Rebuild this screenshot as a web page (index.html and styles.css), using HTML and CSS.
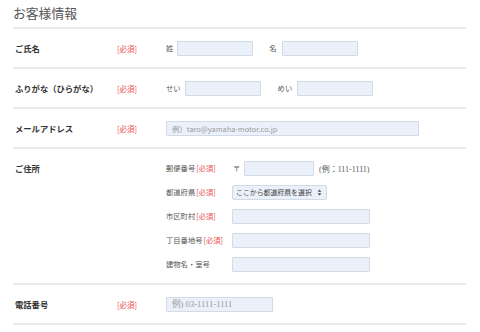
FILE: index.html
```html
<!DOCTYPE html>
<html lang="ja">
<head>
<meta charset="utf-8">
<link rel="stylesheet" href="styles.css">
</head>
<body>
<div class="form">
  <h2 class="title">お客様情報</h2>

  <div class="row">
    <div class="label">ご氏名</div>
    <div class="req">[必須]</div>
    <div class="content">
      <span class="fl">姓</span><input class="in w76" type="text">
      <span class="fl gap-name">名</span><input class="in w76" type="text">
    </div>
  </div>

  <div class="row">
    <div class="label">ふりがな（ひらがな）</div>
    <div class="req">[必須]</div>
    <div class="content">
      <span class="fl">せい</span><input class="in w76" type="text">
      <span class="fl gap-kana">めい</span><input class="in w76" type="text">
    </div>
  </div>

  <div class="row">
    <div class="label">メールアドレス</div>
    <div class="req">[必須]</div>
    <div class="content">
      <input class="in w253" type="text" placeholder="例）taro@yamaha-motor.co.jp">
    </div>
  </div>

  <div class="row row-addr">
    <div class="label">ご住所</div>
    <div class="req"></div>
    <div class="content addr">
      <div class="sub"><span class="sl">郵便番号<span class="sreq">[必須]</span></span><span class="zip">〒</span><input class="in w70" type="text"><span class="ex">(例：111-1111)</span></div>
      <div class="sub"><span class="sl">都道府県<span class="sreq">[必須]</span></span><div class="sel">ここから都道府県を選択<svg class="arr" width="5" height="7" viewBox="0 0 5 7"><path d="M2.5 0.5 L4.5 2.8 L0.5 2.8 Z M2.5 6.5 L4.5 4.2 L0.5 4.2 Z" fill="#555"/></svg></div></div>
      <div class="sub"><span class="sl">市区町村<span class="sreq">[必須]</span></span><input class="in w138" type="text"></div>
      <div class="sub"><span class="sl">丁目番地号<span class="sreq">[必須]</span></span><input class="in w138" type="text"></div>
      <div class="sub"><span class="sl">建物名・室号</span><input class="in w138" type="text"></div>
    </div>
  </div>

  <div class="row">
    <div class="label">電話番号</div>
    <div class="req">[必須]</div>
    <div class="content">
      <input class="in w107 serif" type="text" placeholder="例) 03-1111-1111">
    </div>
  </div>
</div>
</body>
</html>
```

FILE: styles.css
```css
html, body {
  margin: 0;
  padding: 0;
  background: #ffffff;
}
body {
  font-family: "Noto Sans CJK JP", "Noto Sans", sans-serif;
  color: #333;
}
.form {
  margin-left: 13px;
  width: 453px;
}
.title {
  margin: 0;
  height: 27px;
  line-height: 26px;
  font-size: 12.8px;
  font-weight: normal;
  color: #555;
  border-bottom: 2px solid #ebebe7;
}
.row {
  display: grid;
  grid-template-columns: 102px 49px 1fr;
  align-items: center;
  height: 38px;
  padding-left: 2px;
  border-bottom: 2px solid #ebebe7;
}
.label {
  font-size: 8.3px;
  font-weight: bold;
  color: #333;
  white-space: nowrap;
}
.req {
  font-size: 7.5px;
  color: #e6504f;
  white-space: nowrap;
}
.content {
  display: flex;
  align-items: center;
  font-size: 7.3px;
  color: #555;
}
.fl {
  margin-right: 4px;
}
.gap-name { margin-left: 16px; margin-right: 5px; }
.gap-kana { margin-left: 17px; margin-right: 5px; }
.in {
  box-sizing: border-box;
  height: 15px;
  margin: 0;
  padding: 0 5px;
  background: #ebf1fa;
  border: 1px solid #d4dae3;
  border-radius: 1px;
  font-family: "Noto Sans CJK JP", "Noto Sans", sans-serif;
  font-size: 7.4px;
  color: #555;
  outline: none;
}
.in::placeholder {
  color: #9a9a9a;
}
.serif, .serif::placeholder {
  font-family: "Liberation Serif", "Noto Sans CJK JP", serif;
  font-size: 8.6px;
}
.w76 { width: 76px; }
.w253 { width: 253px; }
.w107 { width: 107px; }
.w70 { width: 70px; }
.w138 { width: 138px; }

.row-addr {
  height: auto;
  align-items: start;
  padding-top: 7px;
  padding-bottom: 7px;
}
.row-addr .label, .row-addr .req {
  line-height: 24px;
}
.addr {
  flex-direction: column;
  align-items: stretch;
}
.sub {
  display: flex;
  align-items: center;
  height: 24px;
}
.sl {
  width: 66px;
  flex: none;
  white-space: nowrap;
  color: #555;
}
.sreq {
  color: #e6504f;
  margin-left: 1px;
}
.zip {
  width: 12px;
  padding-left: 1px;
  box-sizing: border-box;
  flex: none;
}
.ex {
  margin-left: 5px;
  font-family: "Liberation Serif", "Noto Sans CJK JP", serif;
  font-size: 8px;
  color: #555;
}
.sel {
  box-sizing: border-box;
  width: 95px;
  height: 15px;
  display: flex;
  align-items: center;
  justify-content: space-between;
  padding: 0 4px 0 3px;
  background: #ebf1fa;
  border: 1px solid #d4dae3;
  border-radius: 2px;
  font-size: 6.9px;
  color: #444;
  white-space: nowrap;
}
.arr {
  flex: none;
}
```
